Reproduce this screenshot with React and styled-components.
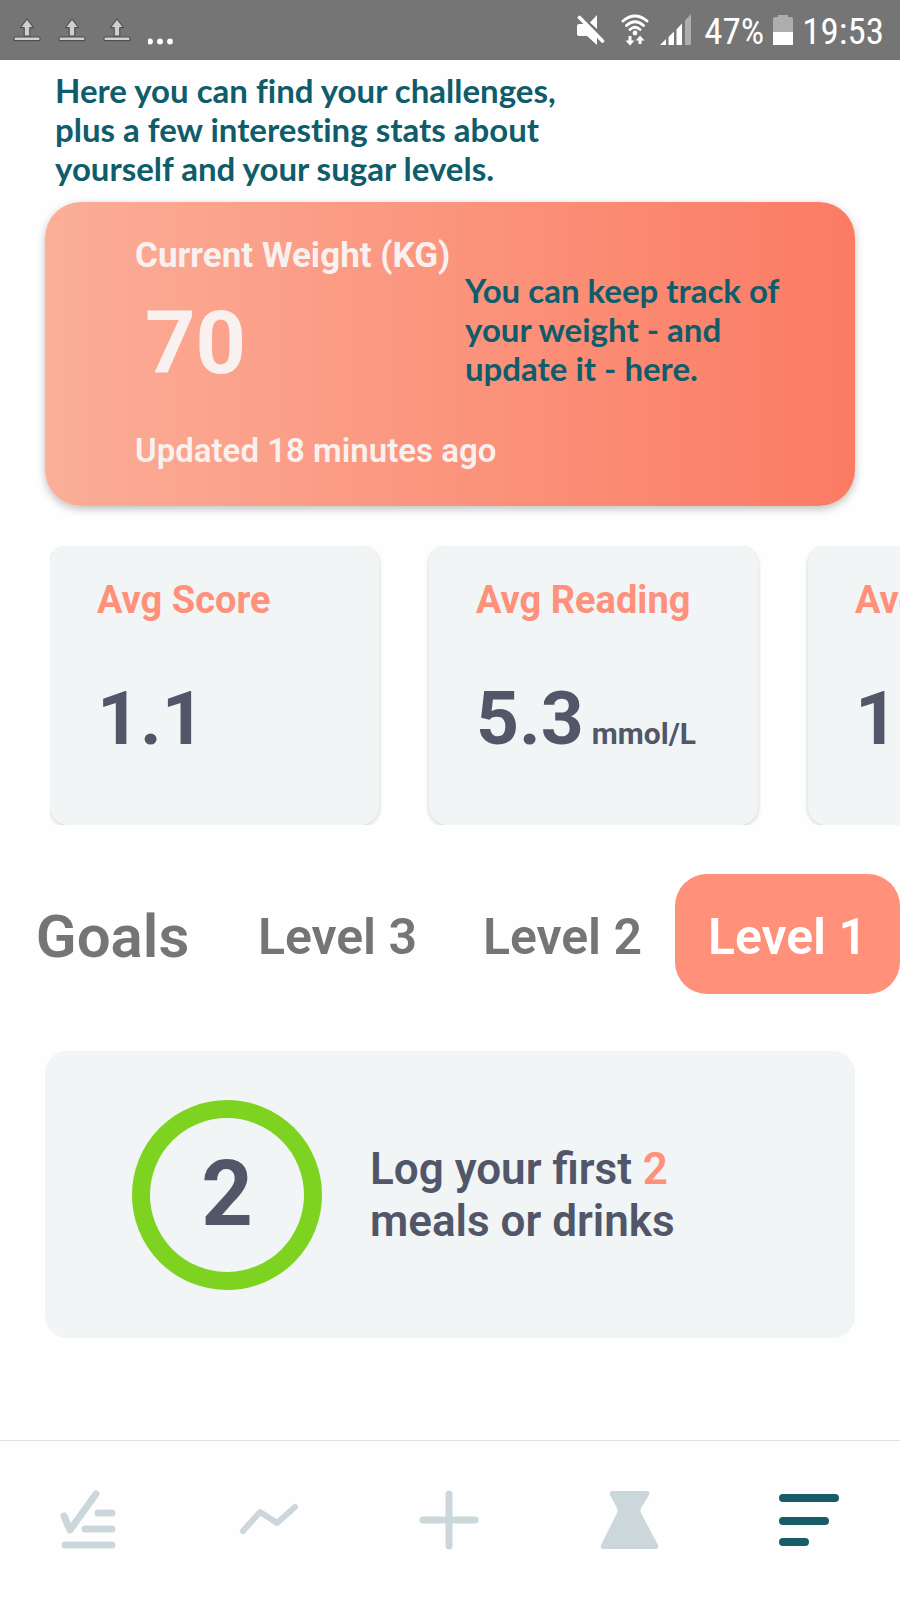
import React from "react";
import styled, { createGlobalStyle } from "styled-components";

const color = {
  coral: "#ff907a",
  ink: "#525669",
  gray: "#757575",
  teal: "#0f5c6b",
  panel: "#f1f5f6",
  muted: "#ccd7db",
};

const GlobalStyle = createGlobalStyle`
  *, *::before, *::after { box-sizing: border-box; }
  body { margin: 0; background: #fefefe; font-family: Roboto, "Liberation Sans", sans-serif; }
  h2, h3, p, ul, dl, dt, dd { margin: 0; padding: 0; }
  button { border: 0; padding: 0; background: none; font-family: inherit; cursor: pointer; }
`;

const Screen = styled.div`
  display: flex;
  flex-direction: column;
  min-height: 100vh;
  overflow-x: hidden;
`;

const StatusBar = styled.header`
  display: flex;
  justify-content: space-between;
  height: 60px;
  padding: 0 16px 0 13px;
  background: ${color.gray};
  color: #fff;
`;

const StatusGroup = styled.div`
  display: flex;
  align-items: center;
  gap: ${(p) => p.$gap}px;
`;

const StatusText = styled.span`
  padding-top: 4px;
  font-family: "Roboto Condensed", "Liberation Sans Narrow", Roboto, sans-serif;
  font-size: 37px;
  line-height: 60px;
`;

const Note = styled.p`
  font-family: Lato, "Open Sans", sans-serif;
  font-size: 33px;
  font-weight: 700;
  font-variant-ligatures: no-common-ligatures;
  line-height: 39px;
  color: ${color.teal};
`;

const Intro = styled(Note)`
  padding: 11px 55px 14px;
`;

const WeightCard = styled.section`
  display: grid;
  grid-template-columns: 330px 1fr;
  margin: 0 45px;
  padding: 32px 30px 35px 90px;
  border-radius: 36px;
  background: linear-gradient(90deg, #fbae98, #fb9780 45%, #fb7b63);
  box-shadow: 0 3px 9px rgba(0, 0, 0, 0.25);
  color: #f9f1f0;
`;

const WeightTitle = styled.h2`
  font-size: 35px;
  font-weight: 700;
  line-height: 44px;
  white-space: nowrap;
`;

const WeightValue = styled.p`
  padding: 15px 0 0 10px;
  font-size: 88px;
  font-weight: 700;
  line-height: 100px;
`;

const WeightNote = styled(Note)`
  grid-column: 2;
  grid-row: 1 / span 2;
  align-self: end;
  padding-bottom: 5px;
`;

const WeightUpdated = styled.p`
  grid-column: 1 / -1;
  padding-top: 38px;
  font-size: 33px;
  font-weight: 600;
  line-height: 40px;
`;

const StatList = styled.dl`
  display: flex;
  gap: 50px;
  margin: 40px 0 0 50px;
  overflow: hidden;
`;

const StatCard = styled.div`
  flex: 0 0 329px;
  padding: 30px 0 63px 47px;
  border-radius: 18px;
  background: ${color.panel};
  box-shadow: 0 1px 4px rgba(0, 0, 0, 0.2);
  white-space: nowrap;
`;

const StatLabel = styled.dt`
  font-size: 38px;
  font-weight: 700;
  line-height: 48px;
  color: ${color.coral};
`;

const StatValue = styled.dd`
  margin-top: 50px;
  font-size: 75px;
  font-weight: 700;
  line-height: 88px;
  color: ${color.ink};
`;

const StatUnit = styled.span`
  margin-left: 8px;
  font-size: 30px;
  line-height: 30px;
`;

const GoalBar = styled.div`
  display: grid;
  grid-template-columns: repeat(4, 1fr);
  align-items: center;
  margin-top: 49px;
  color: ${color.gray};
`;

const GoalHeading = styled.h2`
  padding-top: 6px;
  text-align: center;
  font-size: 60px;
  font-weight: 600;
  line-height: 114px;
`;

const LevelTab = styled.button`
  padding-top: 6px;
  border-radius: 32px;
  background: ${(p) => (p.$active ? color.coral : "transparent")};
  color: ${(p) => (p.$active ? "#fff" : color.gray)};
  font-size: 50px;
  font-weight: 600;
  line-height: 114px;
`;

const GoalCard = styled.section`
  display: flex;
  align-items: center;
  gap: 48px;
  min-height: 287px;
  margin: 57px 45px 40px;
  padding: 0 87px;
  border-radius: 22px;
  background: ${color.panel};
  color: ${color.ink};
`;

const GoalRing = styled.div`
  flex: none;
  width: 190px;
  height: 190px;
  border: 18px solid #7ed321;
  border-radius: 50%;
  text-align: center;
  font-size: 90px;
  font-weight: 700;
  line-height: 154px;
`;

const GoalText = styled.p`
  max-width: 330px;
  font-size: 44px;
  font-weight: 600;
  line-height: 52px;
`;

const GoalCount = styled.span`
  color: ${color.coral};
`;

const TabBar = styled.nav`
  display: grid;
  grid-template-columns: repeat(5, 1fr);
  height: 160px;
  margin-top: auto;
  border-top: 1px solid #dfe1e2;
`;

const TabButton = styled.button`
  display: flex;
  align-items: center;
  justify-content: center;
  color: ${(p) => (p.$active ? "#185b69" : color.muted)};
`;

const NavIcon = ({ children }) => (
  <svg width="64" height="64" viewBox="0 0 64 64" fill="none" stroke="currentColor"
    strokeWidth="7" strokeLinecap="round" strokeLinejoin="round" aria-hidden="true">
    {children}
  </svg>
);

const UploadIcon = () => (
  <svg width="28" height="28" viewBox="0 0 28 28" fill="#d0d0d0" stroke="#4f4f4f" strokeWidth="1.2" aria-hidden="true">
    <path d="M14 3 L20.500 11.500 H16.800 V20 H11.200 V11.500 H7.500 Z" strokeLinejoin="round" />
    <rect x="1" y="21" width="26" height="3.600" rx="1" />
  </svg>
);

const DotsIcon = () => (
  <svg width="28" height="30" viewBox="0 0 28 30" fill="#fff" aria-hidden="true">
    <circle cx="2" cy="26.500" r="2.900" />
    <circle cx="12" cy="26.500" r="2.900" />
    <circle cx="22" cy="26.500" r="2.900" />
  </svg>
);

const MuteIcon = () => (
  <svg width="30" height="32" viewBox="0 0 30 32" fill="#fff" aria-hidden="true">
    <path d="M2 10 H8 L20 22 V31 L10 22 H2 Q0 22 0 20 V12 Q0 10 2 10 Z" />
    <path d="M20 1 V15 L13 8.500 Z" />
    <path d="M2.500 3.500 L25.500 27" stroke="#fff" strokeWidth="3.600" strokeLinecap="round" />
  </svg>
);

const WifiIcon = () => (
  <svg width="28" height="32" viewBox="0 0 28 32" fill="none" stroke="#fff" aria-hidden="true">
    <path d="M2 7 Q14 -3 26 7 M5.500 11.500 Q14 4 22.500 11.500 M9 15.500 Q14 11 19 15.500" strokeWidth="2.900" strokeLinecap="round" />
    <circle cx="14" cy="19" r="2.400" fill="#fff" stroke="none" />
    <path d="M7.500 22 H10.500 V26.500 H13.500 L9 31.500 L4.500 26.500 H7.500 Z M17.500 30 V26.500 H14.800 L19 21.500 L23.500 26.500 H20.500 V30 Z" fill="#fff" stroke="none" />
  </svg>
);

const SignalIcon = () => (
  <svg width="32" height="32" viewBox="0 0 32 32" fill="#fff" aria-hidden="true">
    <path d="M0 31 L6 25 V31 Z M8.500 31 V23 L14 17.500 V31 Z M16.500 31 V15.500 L22 9.500 V31 Z" />
    <path d="M25 31 V6.500 L31 0 V31 Z" fill="#adadad" />
  </svg>
);

const BatteryIcon = () => (
  <svg width="20" height="32" viewBox="0 0 20 32" aria-hidden="true">
    <path d="M0 31 V5 Q0 3 2 3 H5 V1 H15 V3 H18 Q20 3 20 5 V31 Z" fill="#adadad" />
    <rect y="18" width="20" height="13" fill="#fff" />
  </svg>
);

const stats = [
  { label: "Avg Score", value: "1.1" },
  { label: "Avg Reading", value: "5.3", unit: "mmol/L" },
  { label: "Avg", value: "1" },
];

const tabs = [
  { name: "Checklist", icon: <><path d="M6 27 L12 41 L38 5" /><path d="M40 24 H54 M27 40 H54 M7 56 H54" /></> },
  { name: "Trends", icon: <path d="M5 42 L22 23 L39 34 L57 18" strokeWidth="6" /> },
  { name: "Add", icon: <path d="M5 31 H57 M31 5 V57" /> },
  { name: "Lab", icon: <path d="M14 2 H49 Q52 2 51 6 L43 19 Q42 22 43 24 L60 56 Q61 60 58 60 H5 Q2 60 3 56 L19 24 Q20 22 19 19 L12 6 Q11 2 14 2 Z" fill="currentColor" stroke="none" /> },
  { name: "Stats", active: true, icon: <path d="M5 9 H57 M5 32 H47 M5 53 H27" strokeWidth="8" /> },
];

export default function App() {
  return (
    <Screen>
      <GlobalStyle />
      <StatusBar>
        <StatusGroup $gap={17}>
          <UploadIcon /><UploadIcon /><UploadIcon /><DotsIcon />
        </StatusGroup>
        <StatusGroup $gap={12}>
          <StatusGroup $gap={14}>
            <MuteIcon />
            <StatusGroup $gap={11}><WifiIcon /><SignalIcon /></StatusGroup>
          </StatusGroup>
          <StatusGroup $gap={9}>
            <StatusText>47%</StatusText>
            <BatteryIcon />
            <StatusText>19:53</StatusText>
          </StatusGroup>
        </StatusGroup>
      </StatusBar>

      <Intro>
        Here you can find your challenges,<br />
        plus a few interesting stats about<br />
        yourself and your sugar levels.
      </Intro>

      <WeightCard>
        <WeightTitle>Current Weight (KG)</WeightTitle>
        <WeightValue>70</WeightValue>
        <WeightNote>
          You can keep track of<br />
          your weight - and<br />
          update it - here.
        </WeightNote>
        <WeightUpdated>Updated 18 minutes ago</WeightUpdated>
      </WeightCard>

      <StatList>
        {stats.map((s) => (
          <StatCard key={s.label}>
            <StatLabel>{s.label}</StatLabel>
            <StatValue>
              {s.value}
              {s.unit && <StatUnit>{s.unit}</StatUnit>}
            </StatValue>
          </StatCard>
        ))}
      </StatList>

      <GoalBar>
        <GoalHeading>Goals</GoalHeading>
        <LevelTab type="button">Level 3</LevelTab>
        <LevelTab type="button">Level 2</LevelTab>
        <LevelTab type="button" $active>Level 1</LevelTab>
      </GoalBar>

      <GoalCard>
        <GoalRing>2</GoalRing>
        <GoalText>Log your first <GoalCount>2</GoalCount> meals or drinks</GoalText>
      </GoalCard>

      <TabBar>
        {tabs.map((t) => (
          <TabButton key={t.name} type="button" aria-label={t.name} $active={t.active}>
            <NavIcon>{t.icon}</NavIcon>
          </TabButton>
        ))}
      </TabBar>
    </Screen>
  );
}
